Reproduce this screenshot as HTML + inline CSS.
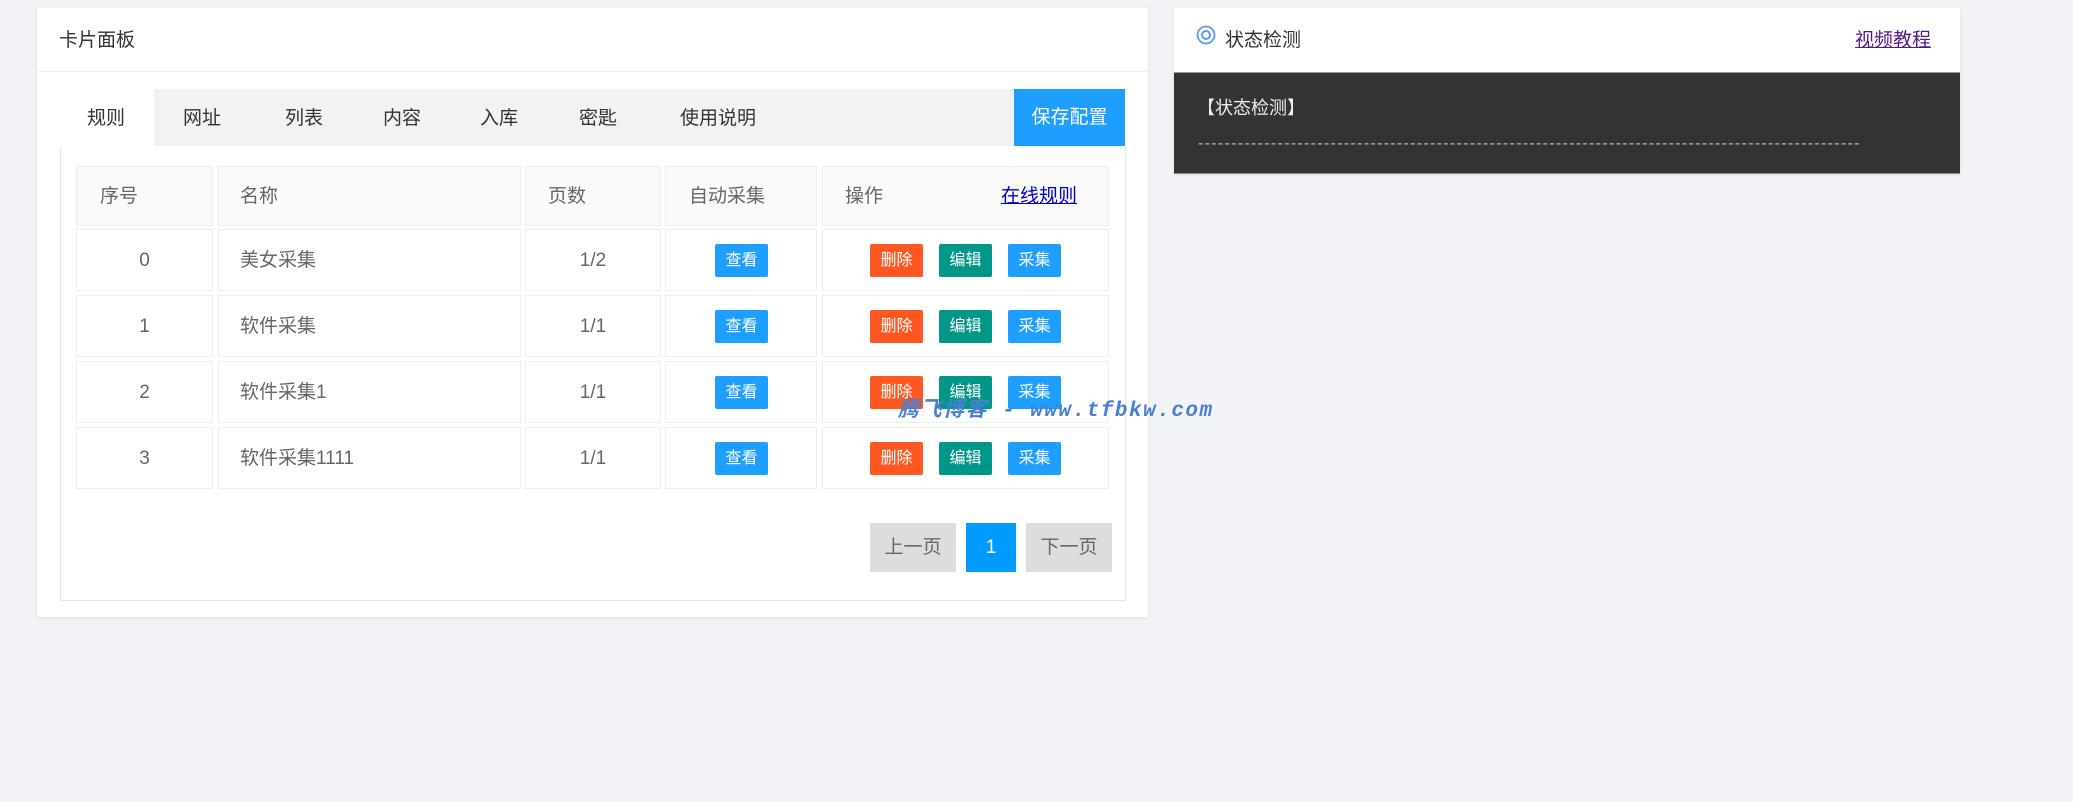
<!DOCTYPE html>
<html><head><meta charset="utf-8"><style>
*{margin:0;padding:0;box-sizing:border-box}
body{width:2073px;height:802px;background:#f2f3f7;font-family:"Liberation Sans","Noto Sans CJK SC",sans-serif;position:relative;overflow:hidden;color:#666}
.a{position:absolute}
.card{background:#fff;box-shadow:0 1px 4px rgba(0,0,0,.08)}
.tab{position:absolute;top:89px;height:57px;line-height:59px;font-size:19px;color:#333}
.cell{position:absolute;background:#fff;border:1px solid #eee}
.hd{background:#fafafa}
.t{position:absolute;font-size:19px;color:#666;line-height:20px}
.btn{position:absolute;width:53px;height:33px;line-height:33px;text-align:center;color:#fff;font-size:16px;border-radius:2px}
.b{background:#1E9FFF}.o{background:#FF5722}.g{background:#009688}
</style></head><body>
<div class="a card" style="left:37px;top:8px;width:1111px;height:609px"></div>
<div class="a" style="left:37px;top:71px;width:1111px;height:1px;background:#eee"></div>
<div class="a" style="left:59px;top:29px;font-size:19px;color:#333;line-height:24px">卡片面板</div>
<div class="a" style="left:60px;top:89px;width:1066px;height:512px;border:1px solid #e6e6e6"></div>
<div class="a" style="left:60px;top:89px;width:1066px;height:57px;background:#f2f2f2"></div>
<div class="a" style="left:60px;top:89px;width:94px;height:58px;background:#fff"></div>
<div class="tab" style="left:87px">规则</div>
<div class="tab" style="left:183px">网址</div>
<div class="tab" style="left:285px">列表</div>
<div class="tab" style="left:383px">内容</div>
<div class="tab" style="left:480px">入库</div>
<div class="tab" style="left:579px">密匙</div>
<div class="tab" style="left:680px">使用说明</div>
<div class="a" style="left:1014px;top:89px;width:111px;height:57px;background:#1E9FFF;color:#fff;font-size:19px;line-height:57px;text-align:center">保存配置</div>

<div class="cell hd" style="left:76px;top:166px;width:137px;height:60px"></div>
<div class="cell hd" style="left:218px;top:166px;width:303px;height:60px"></div>
<div class="cell hd" style="left:525px;top:166px;width:136px;height:60px"></div>
<div class="cell hd" style="left:665px;top:166px;width:152px;height:60px"></div>
<div class="cell hd" style="left:822px;top:166px;width:287px;height:60px"></div>
<div class="t" style="left:100px;top:187px">序号</div>
<div class="t" style="left:240px;top:187px">名称</div>
<div class="t" style="left:548px;top:187px">页数</div>
<div class="t" style="left:689px;top:187px">自动采集</div>
<div class="t" style="left:845px;top:187px">操作</div>
<div class="t" style="left:1001px;top:187px;color:#00c;text-decoration:underline">在线规则</div>

<div class="cell" style="left:76px;top:229px;width:137px;height:62px"></div><div class="cell" style="left:218px;top:229px;width:303px;height:62px"></div><div class="cell" style="left:525px;top:229px;width:136px;height:62px"></div><div class="cell" style="left:665px;top:229px;width:152px;height:62px"></div><div class="cell" style="left:822px;top:229px;width:287px;height:62px"></div>
<div class="t" style="left:76px;width:137px;text-align:center;top:251px">0</div><div class="t" style="left:240px;top:251px">美女采集</div><div class="t" style="left:525px;width:136px;text-align:center;top:251px">1/2</div>
<div class="btn b" style="left:715px;top:244px">查看</div><div class="btn o" style="left:870px;top:244px">删除</div><div class="btn g" style="left:939px;top:244px">编辑</div><div class="btn b" style="left:1008px;top:244px">采集</div>

<div class="cell" style="left:76px;top:295px;width:137px;height:62px"></div><div class="cell" style="left:218px;top:295px;width:303px;height:62px"></div><div class="cell" style="left:525px;top:295px;width:136px;height:62px"></div><div class="cell" style="left:665px;top:295px;width:152px;height:62px"></div><div class="cell" style="left:822px;top:295px;width:287px;height:62px"></div>
<div class="t" style="left:76px;width:137px;text-align:center;top:317px">1</div><div class="t" style="left:240px;top:317px">软件采集</div><div class="t" style="left:525px;width:136px;text-align:center;top:317px">1/1</div>
<div class="btn b" style="left:715px;top:310px">查看</div><div class="btn o" style="left:870px;top:310px">删除</div><div class="btn g" style="left:939px;top:310px">编辑</div><div class="btn b" style="left:1008px;top:310px">采集</div>

<div class="cell" style="left:76px;top:361px;width:137px;height:62px"></div><div class="cell" style="left:218px;top:361px;width:303px;height:62px"></div><div class="cell" style="left:525px;top:361px;width:136px;height:62px"></div><div class="cell" style="left:665px;top:361px;width:152px;height:62px"></div><div class="cell" style="left:822px;top:361px;width:287px;height:62px"></div>
<div class="t" style="left:76px;width:137px;text-align:center;top:383px">2</div><div class="t" style="left:240px;top:383px">软件采集1</div><div class="t" style="left:525px;width:136px;text-align:center;top:383px">1/1</div>
<div class="btn b" style="left:715px;top:376px">查看</div><div class="btn o" style="left:870px;top:376px">删除</div><div class="btn g" style="left:939px;top:376px">编辑</div><div class="btn b" style="left:1008px;top:376px">采集</div>

<div class="cell" style="left:76px;top:427px;width:137px;height:62px"></div><div class="cell" style="left:218px;top:427px;width:303px;height:62px"></div><div class="cell" style="left:525px;top:427px;width:136px;height:62px"></div><div class="cell" style="left:665px;top:427px;width:152px;height:62px"></div><div class="cell" style="left:822px;top:427px;width:287px;height:62px"></div>
<div class="t" style="left:76px;width:137px;text-align:center;top:449px">3</div><div class="t" style="left:240px;top:449px">软件采集1111</div><div class="t" style="left:525px;width:136px;text-align:center;top:449px">1/1</div>
<div class="btn b" style="left:715px;top:442px">查看</div><div class="btn o" style="left:870px;top:442px">删除</div><div class="btn g" style="left:939px;top:442px">编辑</div><div class="btn b" style="left:1008px;top:442px">采集</div>

<div class="a" style="left:870px;top:523px;width:86px;height:49px;background:#ddd;color:#666;font-size:19px;line-height:49px;text-align:center">上一页</div>
<div class="a" style="left:966px;top:523px;width:50px;height:49px;background:#009BFF;color:#fff;font-size:19px;line-height:49px;text-align:center">1</div>
<div class="a" style="left:1026px;top:523px;width:86px;height:49px;background:#ddd;color:#666;font-size:19px;line-height:49px;text-align:center">下一页</div>

<div class="a" style="left:898px;top:399px;font-size:21px;letter-spacing:1.5px;font-weight:bold;font-style:italic;color:#4a7fd0;font-family:'Liberation Mono','Noto Sans CJK SC',monospace;line-height:26px;white-space:nowrap">腾飞博客 - www.tfbkw.com</div>

<div class="a card" style="left:1174px;top:8px;width:786px;height:166px"></div>
<div class="a" style="left:1174px;top:72px;width:786px;height:102px;background:#333;border-top:1px solid #999;border-bottom:1px solid #888"></div>
<svg class="a" style="left:1196px;top:25px" width="20" height="20" viewBox="0 0 20 20"><circle cx="10" cy="10" r="8.5" fill="none" stroke="#5a9cf0" stroke-width="1.8"/><circle cx="10" cy="10" r="4" fill="none" stroke="#5a9cf0" stroke-width="2"/></svg>
<div class="a" style="left:1225px;top:29px;font-size:19px;color:#333;line-height:24px">状态检测</div>
<div class="a" style="left:1855px;top:29px;font-size:19px;color:#551a8b;line-height:24px;text-decoration:underline">视频教程</div>
<div class="a" style="left:1197px;top:96px;font-size:18px;color:#eee;line-height:24px">【状态检测】</div>
<div class="a" style="left:1198px;top:134px;width:664px;overflow:hidden;white-space:nowrap;font-size:16px;color:#bbb;letter-spacing:1.3px;line-height:20px">----------------------------------------------------------------------------------------------------</div>
</body></html>
